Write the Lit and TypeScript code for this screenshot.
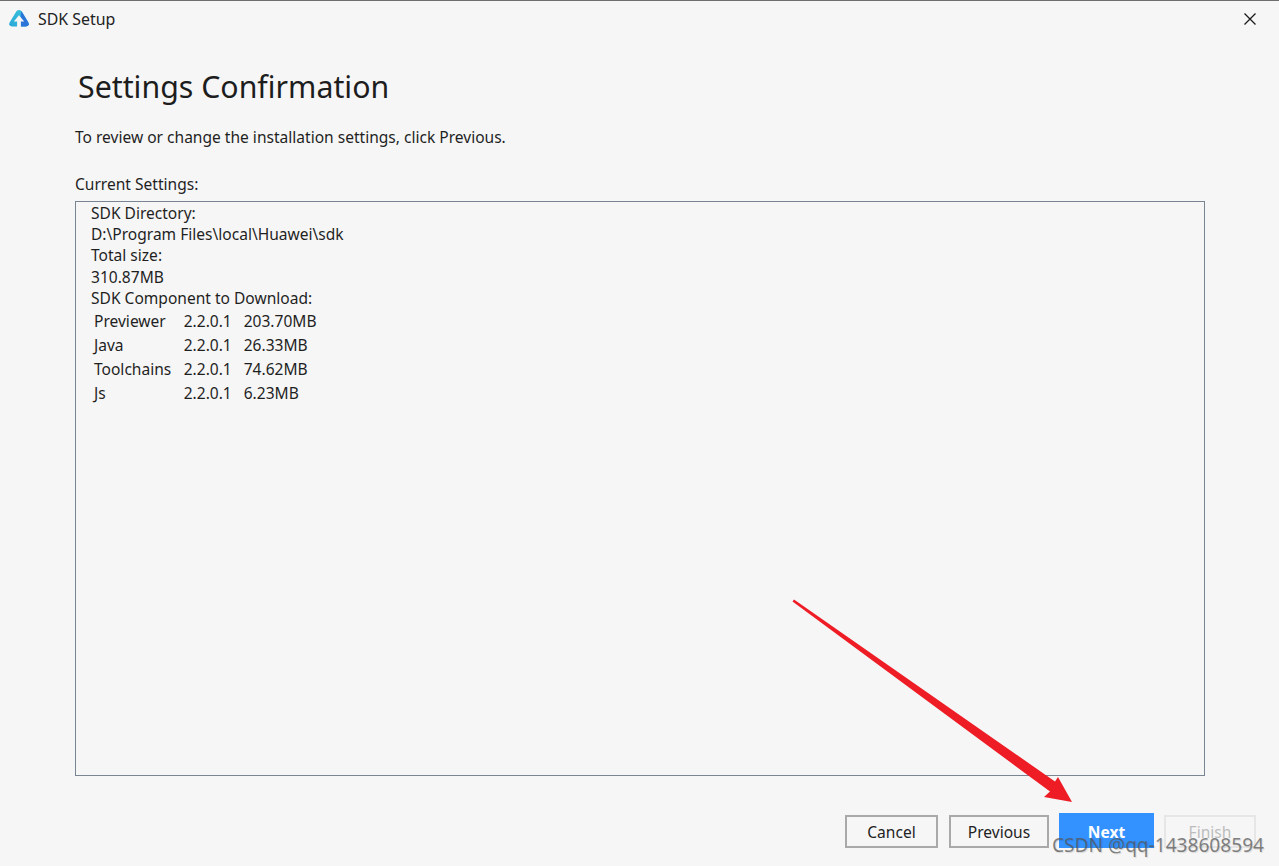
import { LitElement, html, css, svg } from "lit";
import { customElement } from "lit/decorators.js";

const rows = [
  ["Previewer", "2.2.0.1", "203.70MB"],
  ["Java", "2.2.0.1", "26.33MB"],
  ["Toolchains", "2.2.0.1", "74.62MB"],
  ["Js", "2.2.0.1", "6.23MB"],
];

@customElement("app-root")
export class AppRoot extends LitElement {
  static styles = css`
    :host {
      display: block;
      position: relative;
      width: 1279px;
      height: 866px;
      overflow: hidden;
      background: #f6f6f6;
      color: #1f1f1f;
      font-family: "Noto Sans", "Open Sans", sans-serif;
      font-size: 15.55px;
    }
    .titlebar {
      height: 38px;
      box-sizing: border-box;
      border-top: 1px solid #6e6e6e;
      display: flex;
      align-items: center;
      padding: 0 22px 2px 9px;
      gap: 9px;
    }
    .titlebar .t { flex: 1; font-size: 15.9px; color: #222; }
    .logo { width: 20px; height: 17px; display: block; }
    .close { width: 14px; height: 14px; display: block; }
    .main { padding: 0 74px 0 75px; }
    h1 {
      margin: 28px 0 0 3px;
      font-size: 30.3px;
      font-weight: 400;
      line-height: 42px;
      color: #1d1d1d;
    }
    .sub { margin-top: 19px; line-height: 20px; }
    .cur { margin-top: 27px; line-height: 20px; }
    .box {
      margin-top: 7px;
      height: 575px;
      box-sizing: border-box;
      border: 1px solid #7a8594;
      padding: 0.7px 15px;
    }
    .line { line-height: 21.3px; height: 21.3px; }
    .grid {
      display: grid;
      grid-template-columns: 89.7px 60px auto;
      justify-content: start;
      grid-auto-rows: 23.8px;
      margin: 0.3px 0 0 3px;
      align-items: center;
    }
    .actions {
      display: flex;
      justify-content: flex-end;
      align-items: center;
      gap: 10px;
      margin-top: 39px;
      padding-right: 23px;
    }
    .btn {
      height: 33px;
      box-sizing: border-box;
      border: 2px solid #a9a9a9;
      display: flex;
      align-items: center;
      justify-content: center;
      color: #222;
    }
    .cancel { width: 93px; margin-right: 1px; }
    .prev { width: 100px; }
    .next {
      width: 95px;
      height: 35px;
      margin-top: -2px;
      border: 0;
      padding-top: 2px;
      background: #3392ff;
      color: #fff;
      font-weight: 700;
    }
    .finish { width: 92px; border-color: #e6e6e6; color: #bdbdbd; }
    .arrow { position: absolute; left: 0; top: 0; width: 1279px; height: 866px; pointer-events: none; }
    .mark {
      position: absolute;
      left: 1052px;
      top: 833px;
      font-size: 19.1px;
      line-height: 24px;
      color: rgba(85, 85, 85, 0.72);
      text-shadow: 1px 1px 1px rgba(0, 0, 0, 0.12);
      white-space: nowrap;
    }
  `;

  render() {
    return html`
      <div class="titlebar">
        <svg class="logo" viewBox="0 0 20 17">
          <defs>
            <linearGradient id="a" x1="0" y1="1" x2="1" y2="0">
              <stop offset="0" stop-color="#2aa8d8" /><stop offset="1" stop-color="#3cc4dc" />
            </linearGradient>
          </defs>
          <path d="M7.6 1 Q10 -.8 12.4 1 L19.4 12.6 Q20.8 16 17 16.6 L3 16.6 Q-.8 16 .6 12.6 Z" fill="url(#a)" />
          <path d="M12.4 1 L19.4 12.6 Q20.8 16 17 16.6 L11.5 16.6 L11.5 8 Z" fill="#2b74d8" />
          <path d="M10 5.2 L15.2 11.4 L11.9 11.4 L11.9 17 L8.1 17 L8.1 11.4 L4.8 11.4 Z" fill="#f6f6f6" />
        </svg>
        <span class="t">SDK Setup</span>
        <svg class="close" viewBox="0 0 14 14">
          <path d="M1.5 1.5 L12.5 12.5 M12.5 1.5 L1.5 12.5" stroke="#1a1a1a" stroke-width="1.3" fill="none" />
        </svg>
      </div>
      <div class="main">
        <h1>Settings Confirmation</h1>
        <div class="sub">To review or change the installation settings, click Previous.</div>
        <div class="cur">Current Settings:</div>
        <div class="box">
          <div class="line">SDK Directory:</div>
          <div class="line">D:\\Program Files\\local\\Huawei\\sdk</div>
          <div class="line">Total size:</div>
          <div class="line">310.87MB</div>
          <div class="line">SDK Component to Download:</div>
          <div class="grid">
            ${rows.map((r) => r.map((c) => html`<span>${c}</span>`))}
          </div>
        </div>
      </div>
      <div class="actions">
        <div class="btn cancel">Cancel</div>
        <div class="btn prev">Previous</div>
        <div class="btn next">Next</div>
        <div class="btn finish">Finish</div>
      </div>
      <svg class="arrow" viewBox="0 0 1279 866">
        ${svg`<path d="M794 599.5 L1055 781.5 L1058 777 L1072 802 L1044 797 L1050 791.5 L792.5 601.5 Z" fill="#ee1c25" />`}
      </svg>
      <div class="mark">CSDN @qq-1438608594</div>
    `;
  }
}
